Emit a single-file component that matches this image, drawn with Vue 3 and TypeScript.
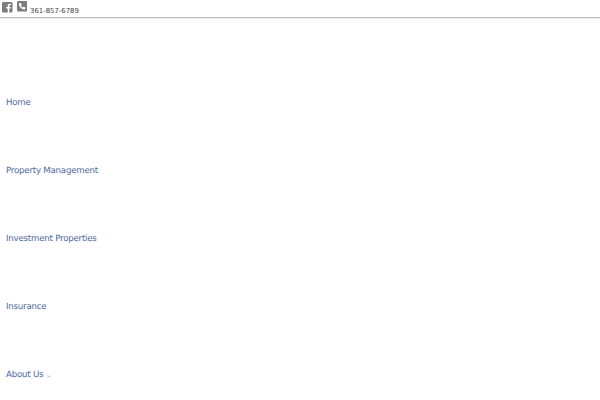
<script setup lang="ts">
const links = [
  { label: 'Home' },
  { label: 'Property Management' },
  { label: 'Investment Properties' },
  { label: 'Insurance' },
  { label: 'About Us', caret: true },
]
</script>

<template>
  <div class="page">
    <header class="topbar">
      <svg class="icon" viewBox="0 0 12 12" aria-label="Facebook">
        <path fill="#7d7d7d" fill-rule="evenodd" d="M1.500 0h9A1.500 1.500 0 0 1 12 1.500v9a1.500 1.500 0 0 1-1.500 1.500H8.300V7.400h1.500l.25-1.800H8.300V4.500c0-.55.15-.9.900-.9h.9V2c-.2 0-.7-.1-1.300-.1-1.350 0-2.300.85-2.300 2.350V5.600H4.900v1.800h1.600V12h-5A1.500 1.500 0 0 1 0 10.500v-9A1.500 1.500 0 0 1 1.500 0z" />
      </svg>
      <svg class="icon icon-phone" viewBox="0 0 12 12" aria-label="Phone">
        <path fill="#7d7d7d" fill-rule="evenodd" d="M1.500 0h9A1.500 1.500 0 0 1 12 1.500v9a1.500 1.500 0 0 1-1.500 1.500h-9A1.500 1.500 0 0 1 0 10.500v-9A1.500 1.500 0 0 1 1.500 0zM3.700 2.200l-1.200.5c-.3.150-.4.400-.35.700.3 3.100 3.100 5.900 6.300 6.300.3.050.55-.1.700-.35l.5-1.200c.1-.25 0-.5-.2-.6L7.800 6.700c-.2-.1-.45-.05-.6.150l-.55.700C5.700 7.100 4.900 6.300 4.450 5.350l.7-.55c.2-.15.250-.4.150-.6L4.300 2.400c-.1-.2-.35-.3-.6-.2z" />
      </svg>
      <span class="phone">361-857-6789</span>
    </header>
    <nav class="menu">
      <a v-for="link in links" :key="link.label" class="item" href="#">
        {{ link.label }}
        <svg v-if="link.caret" class="caret" viewBox="0 0 6 4"><path d="M1 1.500 3 3l2-1.500" fill="none" stroke="#9aa7d8" stroke-width=".7" /></svg>
      </a>
    </nav>
  </div>
</template>

<style scoped>
.page {
  width: 600px;
  height: 400px;
  overflow: hidden;
  background: #fff;
  font-family: "DejaVu Sans", sans-serif;
  text-rendering: geometricPrecision;
}

.topbar {
  display: flex;
  align-items: flex-start;
  gap: 4px;
  height: 18px;
  padding: 2px 0 0 2px;
  box-sizing: border-box;
  border-bottom: 1px solid #bbb;
  box-shadow: 0 1px 1px rgba(0, 0, 0, 0.08);
}

.icon {
  width: 10.5px;
  height: 10.5px;
}

.icon-phone {
  margin-top: -1px;
}

.phone {
  margin-left: -1px;
  margin-top: 4px;
  font-size: 6.9px;
  line-height: 10px;
  color: #444;
}

.menu {
  display: flex;
  flex-direction: column;
  padding: 78px 0 0 6px;
  gap: 54px;
}

.item {
  display: flex;
  align-items: center;
  gap: 3px;
  height: 14px;
  font-size: 8.6px;
  letter-spacing: -0.2px;
  line-height: 14px;
  color: #4b67ad;
  text-decoration: none;
}

.caret {
  width: 6px;
  height: 4px;
  margin-top: 2px;
}
</style>

<style>
body {
  margin: 0;
}
</style>
